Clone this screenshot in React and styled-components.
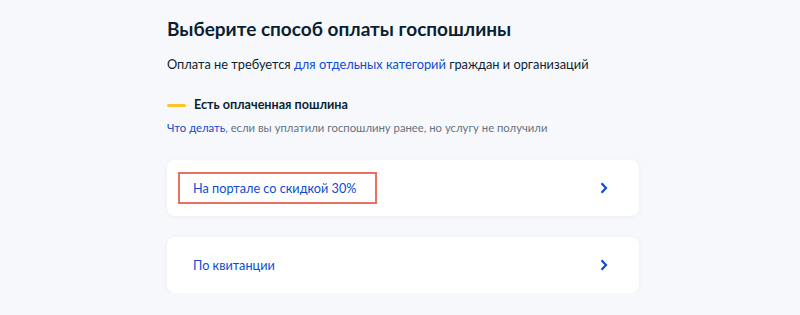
import React from "react";
import styled, { createGlobalStyle } from "styled-components";

const Global = createGlobalStyle`
  html, body { margin: 0; padding: 0; }
  body {
    background: #f7f8fb;
    font-family: Lato, "Noto Sans", sans-serif;
    color: #0b1f33;
    -webkit-font-smoothing: antialiased;
  }
`;

const Page = styled.main`
  width: 472px;
  margin: 0 auto;
  padding: 15px 0 0 6px;
  box-sizing: content-box;
  display: flex;
  flex-direction: column;
`;

const Title = styled.h1`
  margin: 0;
  font-size: 19px;
  line-height: 28px;
  font-weight: 700;
  color: #0b1f33;
`;

const Lead = styled.p`
  margin: 11px 0 0;
  font-size: 12.8px;
  line-height: 20px;
  color: #0b1f33;
  white-space: nowrap;
`;

const Link = styled.a`
  color: #0d4cd3;
  text-decoration: none;
`;

const Notice = styled.div`
  margin-top: 21px;
  display: flex;
  align-items: center;
  gap: 8px;
  font-size: 12.6px;
  line-height: 20px;
  font-weight: 700;
`;

const Dash = styled.span`
  width: 19px;
  height: 3px;
  border-radius: 2px;
  background: #fcc62a;
`;

const Hint = styled.p`
  margin: 3px 0 0;
  font-size: 11.3px;
  line-height: 20px;
  color: #66727f;
  white-space: nowrap;
`;

const Options = styled.div`
  margin-top: 22px;
  display: flex;
  flex-direction: column;
  gap: 21px;
`;

const Card = styled.a`
  height: 56px;
  background: #fff;
  border-radius: 8px;
  box-shadow: 0 1px 4px rgba(226, 232, 241, 0.6);
  display: flex;
  align-items: center;
  justify-content: space-between;
  padding: 0 31px 0 11px;
  text-decoration: none;
  color: #0d4cd3;
  font-size: 12.7px;
`;

const Label = styled.span`
  display: flex;
  align-items: center;
  box-sizing: border-box;
  height: 32px;
  padding: 0 13px;
  width: 199px;
  white-space: nowrap;
  border: 2px solid ${(p) => (p.$marked ? "#e8705f" : "transparent")};
`;

const Chevron = () => (
  <svg width="8" height="12" viewBox="0 0 8 12" fill="none">
    <path d="M1.5 1.2 6 6l-4.5 4.8" stroke="#0d4cd3" strokeWidth="2.2" />
  </svg>
);

export default function App() {
  return (
    <>
      <Global />
      <Page>
        <Title>Выберите способ оплаты госпошлины</Title>
        <Lead>
          Оплата не требуется <Link href="#">для отдельных категорий</Link> граждан и организаций
        </Lead>
        <Notice>
          <Dash />
          Есть оплаченная пошлина
        </Notice>
        <Hint>
          <Link href="#">Что делать</Link>, если вы уплатили госпошлину ранее, но услугу не получили
        </Hint>
        <Options>
          <Card href="#">
            <Label $marked>На портале со скидкой 30%</Label>
            <Chevron />
          </Card>
          <Card href="#">
            <Label>По квитанции</Label>
            <Chevron />
          </Card>
        </Options>
      </Page>
    </>
  );
}
